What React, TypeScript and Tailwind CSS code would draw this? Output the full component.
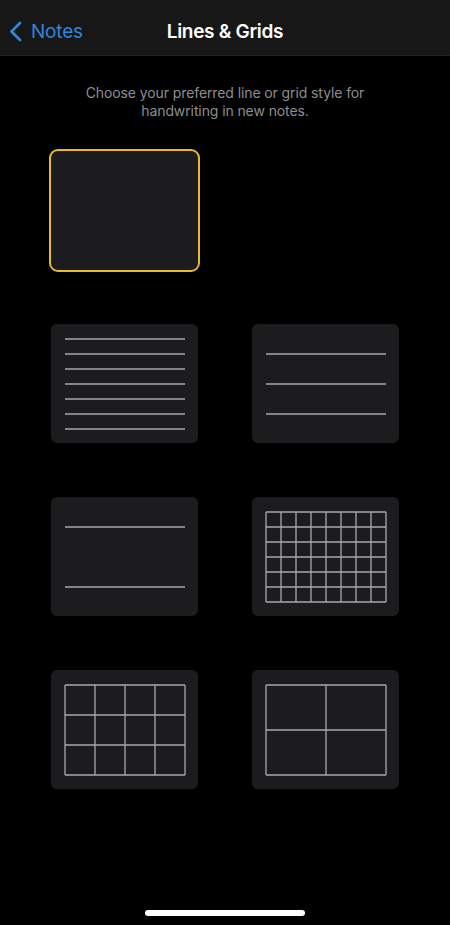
import React from "react";

const LINE = "#a9a9ab";

function Lines({ ys }: { ys: number[] }) {
  return (
    <svg width="122" height="92" viewBox="-1 -1 122 92" className="block -m-px">
      {ys.map((y) => (
        <line key={y} x1="0" x2="120" y1={y} y2={y} stroke={LINE} strokeWidth="1.3" />
      ))}
    </svg>
  );
}

function Grid({ cols, rows }: { cols: number; rows: number }) {
  const w = 120 / cols;
  const h = 90 / rows;
  const xs = Array.from({ length: cols + 1 }, (_, i) => i * w);
  const ys = Array.from({ length: rows + 1 }, (_, i) => i * h);
  return (
    <svg width="122" height="92" viewBox="-1 -1 122 92" className="block -m-px">
      {xs.map((x) => (
        <line key={"x" + x} x1={x} x2={x} y1="0" y2="90" stroke={LINE} strokeWidth="1.3" />
      ))}
      {ys.map((y) => (
        <line key={"y" + y} x1="0" x2="120" y1={y} y2={y} stroke={LINE} strokeWidth="1.3" />
      ))}
    </svg>
  );
}

function Card({ selected, children }: { selected?: boolean; children?: React.ReactNode }) {
  return (
    <div
      className={
        "h-[119px] w-[147px] rounded-[6px] bg-[#1c1c1e] pt-[15px] pl-[14px] " +
        (selected ? "outline-2 outline-[#e8b931] rounded-[7px]" : "")
      }
    >
      {children}
    </div>
  );
}

export default function App() {
  return (
    <div className="relative h-[925px] w-[450px] overflow-hidden bg-black font-['Inter',sans-serif] text-white">
      {/* nav bar */}
      <div className="relative flex h-[56px] items-center justify-center border-b border-[#232325] bg-[#171717] pt-[8px]">
        <div className="absolute left-[9px] top-0 flex h-full items-center gap-[9px] pt-[8px] text-[#2f86de]">
          <svg width="13" height="21" viewBox="0 0 13 21" fill="none">
            <path d="M11 2L2.5 10.5L11 19" stroke="#2f86de" strokeWidth="2.8" strokeLinecap="round" strokeLinejoin="round" />
          </svg>
          <span className="text-[19px] leading-none tracking-[-0.2px]">Notes</span>
        </div>
        <span className="text-[19px] font-semibold leading-none tracking-[-0.3px]">Lines &amp; Grids</span>
      </div>

      <p className="mx-auto mt-[28px] w-[320px] text-center text-[14px] leading-[18px] tracking-[-0.1px] text-[#8d8d92]">
        Choose your preferred line or grid style for handwriting in new notes.
      </p>

      <div className="mt-[31px] grid grid-cols-[147px_147px] gap-x-[54px] gap-y-[54px] pl-[51px]">
        <Card selected />
        <div />
        <Card>
          <Lines ys={[0, 15, 30, 45, 60, 75, 90]} />
        </Card>
        <Card>
          <Lines ys={[15, 45, 75]} />
        </Card>
        <Card>
          <Lines ys={[15, 75]} />
        </Card>
        <Card>
          <Grid cols={8} rows={6} />
        </Card>
        <Card>
          <Grid cols={4} rows={3} />
        </Card>
        <Card>
          <Grid cols={2} rows={2} />
        </Card>
      </div>

      <div className="absolute bottom-[9px] left-[145px] h-[6px] w-[160px] rounded-full bg-white" />
    </div>
  );
}
